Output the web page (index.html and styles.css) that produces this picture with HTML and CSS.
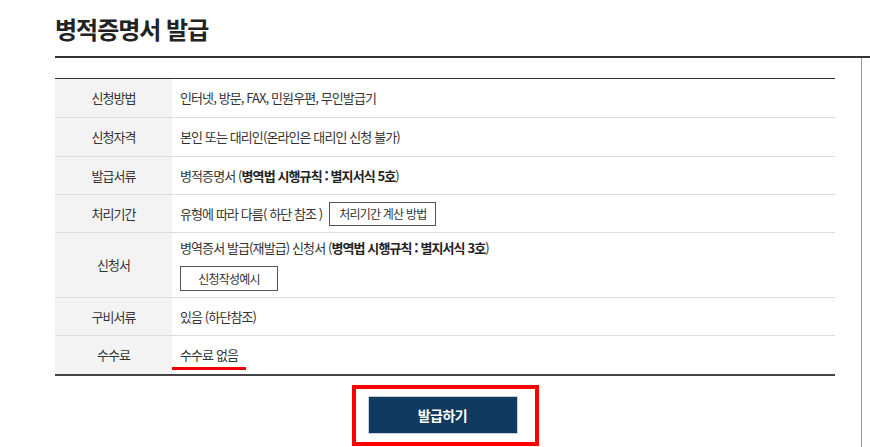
FILE: index.html
```html
<!DOCTYPE html>
<html lang="ko">
<head>
<meta charset="utf-8">
<title>병적증명서 발급</title>
<link rel="stylesheet" href="styles.css">
</head>
<body>
<div class="wrap">
  <h1 class="title">병적증명서 발급</h1>
  <div class="body">
    <div class="content">
      <table class="info">
        <tr><th>신청방법</th><td>인터넷, 방문, FAX, 민원우편, 무인발급기</td></tr>
        <tr><th>신청자격</th><td>본인 또는 대리인(온라인은 대리인 신청 불가)</td></tr>
        <tr class="s"><th>발급서류</th><td>병적증명서 (<b>병역법 시행규칙 : 별지서식 5호</b>)</td></tr>
        <tr class="s"><th>처리기간</th><td><span class="inline">유형에 따라 다름( 하단 참조 )</span><span class="btn btn-calc">처리기간 계산 방법</span></td></tr>
        <tr class="tall"><th>신청서</th><td><div class="line">병역증서 발급(재발급) 신청서 (<b>병역법 시행규칙 : 별지서식 3호</b>)</div><span class="btn btn-example">신청작성예시</span></td></tr>
        <tr class="s"><th>구비서류</th><td>있음 (하단참조)</td></tr>
        <tr class="last"><th>수수료</th><td><span class="fee">수수료 없음</span></td></tr>
      </table>
      <div class="actions">
        <div class="highlight"><span class="submit">발급하기</span></div>
      </div>
    </div>
    <div class="side"></div>
  </div>
</div>
</body>
</html>
```
FILE: styles.css
```css
html, body {
  margin: 0;
  padding: 0;
  background: #fff;
  height: 100%;
}
body {
  font-family: "Noto Sans CJK KR", "Noto Sans", sans-serif;
  color: #333;
  overflow: hidden;
}
.wrap {
  padding-left: 55px;
  height: 100%;
  display: flex;
  flex-direction: column;
}
.title {
  flex-shrink: 0;
  margin: 0;
  padding-top: 12px;
  height: 58px;
  box-sizing: border-box;
  font-size: 24px;
  line-height: 34px;
  font-weight: 700;
  color: #222;
  letter-spacing: -1px;
  border-bottom: 2px solid #333;
}
.body {
  display: flex;
  flex: 1;
}
.content {
  width: 780px;
  padding-top: 20px;
}
.side {
  margin-left: 26px;
  border-left: 1px solid #999;
  flex: 1;
}
.info {
  width: 780px;
  border-collapse: collapse;
  border-top: 1px solid #333;
  border-bottom: 2px solid #444;
  font-size: 13px;
  letter-spacing: -0.9px;
}
.info th, .info td {
  height: 38px;
  border-bottom: 1px solid #ddd;
  padding: 0;
  text-align: left;
  font-weight: 400;
  line-height: 18px;
}
.info tr.s th, .info tr.s td {
  height: 37px;
}
.info th {
  width: 117px;
  background: #f3f3f3;
  text-align: center;
}
.info td {
  padding-left: 8px;
}
.info td b {
  font-weight: 700;
  color: #222;
}
.info tr.last th, .info tr.last td {
  border-bottom: none;
  height: 38px;
}
.info tr.tall td {
  height: 64px;
  padding-top: 5px;
  padding-bottom: 6px;
  box-sizing: border-box;
}
.line {
  line-height: 20px;
  margin-bottom: 8px;
}
.inline {
  vertical-align: middle;
}
.btn {
  display: inline-block;
  box-sizing: border-box;
  border: 1px solid #555;
  background: #fff;
  font-size: 12px;
  text-align: center;
  vertical-align: middle;
  letter-spacing: -0.8px;
}
.btn-calc {
  width: 107px;
  height: 24px;
  line-height: 22px;
  margin-left: 7px;
}
.btn-example {
  display: block;
  width: 98px;
  height: 25px;
  line-height: 23px;
}
.fee {
  position: relative;
  display: inline-block;
}
.fee::after {
  content: "";
  position: absolute;
  left: -8px;
  right: -8px;
  bottom: -6px;
  height: 3px;
  background: #ee0000;
}
.actions {
  display: flex;
  justify-content: center;
  padding-top: 9px;
}
.highlight {
  border: 4px solid #ff0000;
  padding: 7px 17px 8px 12px;
}
.submit {
  display: block;
  width: 150px;
  height: 38px;
  box-sizing: border-box;
  border: 1px solid #c6ced8;
  background: #103a60;
  color: #fff;
  font-size: 14px;
  font-weight: 700;
  line-height: 36px;
  text-align: center;
  letter-spacing: -0.5px;
}
```
